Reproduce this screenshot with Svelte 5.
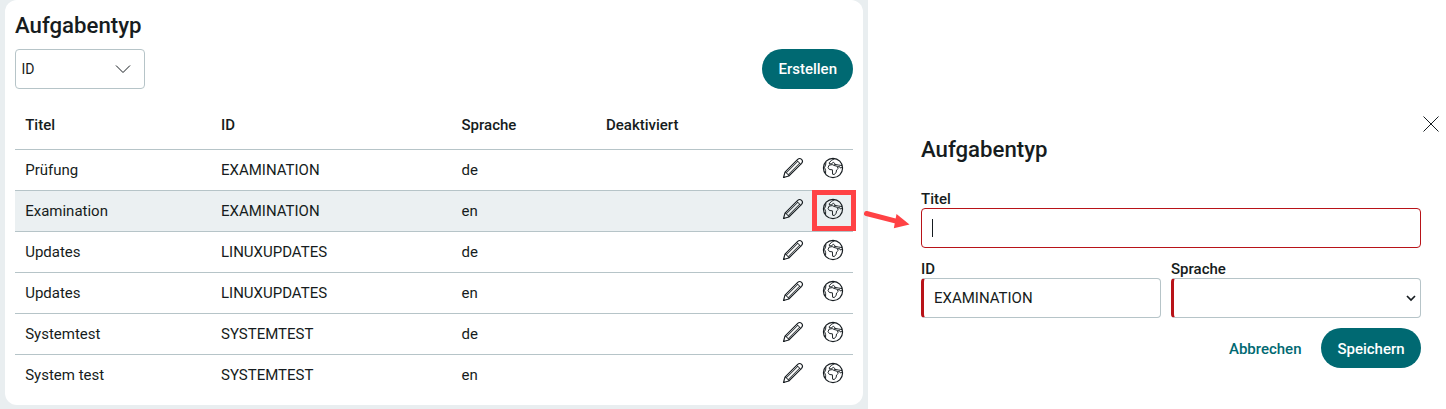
<script lang="ts">
	type Aufgabentyp = { titel: string; kennung: string; sprache: string; aktiv?: boolean };

	const spalten = ['Titel', 'ID', 'Sprache', 'Deaktiviert'];

	const eintraege: Aufgabentyp[] = [
		{ titel: 'Prüfung', kennung: 'EXAMINATION', sprache: 'de' },
		{ titel: 'Examination', kennung: 'EXAMINATION', sprache: 'en', aktiv: true },
		{ titel: 'Updates', kennung: 'LINUXUPDATES', sprache: 'de' },
		{ titel: 'Updates', kennung: 'LINUXUPDATES', sprache: 'en' },
		{ titel: 'Systemtest', kennung: 'SYSTEMTEST', sprache: 'de' },
		{ titel: 'System test', kennung: 'SYSTEMTEST', sprache: 'en' }
	];
</script>

{#snippet stift()}
	<svg class="icon" viewBox="0 0 22 22" aria-hidden="true">
		<path d="M1.5 20.5 3 15.2 15.7 2.4Q17.6.6 19.6 2.4 21.4 4.3 19.6 6.3L6.8 19Z" />
		<path class="fein" d="M3 15.2 4.6 15.3 5 17 6.7 17.4 6.8 19M4.8 15.4 16.2 4M6.6 17.2 18 5.8M14.8 3.4 18.6 7.2M1.5 20.5 3 20" />
	</svg>
{/snippet}

{#snippet globus()}
	<svg class="icon" viewBox="0 0 22 22" aria-hidden="true">
		<circle cx="11" cy="11" r="9.6" />
		<path class="fein" d="M3.9 5 3.6 8.2 2.5 10.4 3.6 13.4 3.6 16.4" />
		<path class="fein" d="M12.6 1.8 9.6 3.2 7.2 5.8 7.5 7 9.7 6.6 11.3 5.3 13 6.7 12.6 8" />
		<path class="fein" d="M7 8.2 10.2 7.6 13 8.8 14.5 8.9 16.3 11.3 14.5 13 14.2 15.2 12.3 17.6 10.6 17.2 10.4 12.8 7.4 12.5 6.1 10.6Z" />
		<path class="fein" d="M13 7.4 16.4 8 20.2 8.6M15.2 9.8 17.6 9.6 18.3 11 20.4 10.4" />
	</svg>
{/snippet}

<div class="seite">
	<section class="liste">
		<div class="karte">
			<h1>Aufgabentyp</h1>
			<div class="werkzeuge">
				<button class="filter" type="button">
					ID
					<svg viewBox="0 0 16 10" aria-hidden="true"><path d="M1 1.5 8 8.5 15 1.5" /></svg>
				</button>
				<button class="primaer" type="button">Erstellen</button>
			</div>
			<div class="tabelle">
				<div class="zeile kopf">
					{#each spalten as spalte (spalte)}
						<span>{spalte}</span>
					{/each}
				</div>
				{#each eintraege as eintrag, i (i)}
					<div class="zeile" class:aktiv={eintrag.aktiv}>
						<span>{eintrag.titel}</span>
						<span>{eintrag.kennung}</span>
						<span>{eintrag.sprache}</span>
						<span></span>
						<span class="aktion">{@render stift()}</span>
						<span class="aktion">
							{@render globus()}
							{#if eintrag.aktiv}<span class="markierung"></span>{/if}
						</span>
					</div>
				{/each}
			</div>
		</div>
	</section>

	<!-- Hinweispfeil von der markierten Aktion zum Dialog -->
	<svg class="pfeil" viewBox="0 0 48 22" aria-hidden="true">
		<path class="schaft" d="M3.5 4.5 34 12.3" />
		<path class="spitze" d="M33.5 5 46.5 15.5 30.8 19.2Z" />
	</svg>

	<section class="dialog">
		<button class="schliessen" type="button" aria-label="Schließen">
			<svg viewBox="0 0 16 16" aria-hidden="true"><path d="M.5.5 15.5 15.5M15.5.5.5 15.5" /></svg>
		</button>
		<h2>Aufgabentyp</h2>
		<div class="feld">
			<span class="label">Titel</span>
			<div class="eingabe fokus"><span class="cursor"></span></div>
		</div>
		<div class="felder">
			<div class="feld">
				<span class="label">ID</span>
				<div class="eingabe pflicht">EXAMINATION</div>
			</div>
			<div class="feld">
				<span class="label">Sprache</span>
				<div class="eingabe pflicht auswahl">
					<svg viewBox="0 0 10 7" aria-hidden="true"><path d="M1 1 5 5 9 1" /></svg>
				</div>
			</div>
		</div>
		<div class="fuss">
			<button class="abbrechen" type="button">Abbrechen</button>
			<button class="primaer speichern" type="button">Speichern</button>
		</div>
	</section>
</div>

<style>
	:global(body) {
		background: #fff;
		overflow: hidden;
	}

	.seite {
		position: relative;
		display: flex;
		height: 409px;
		font: 400 15px/20px Roboto, sans-serif;
		color: #161c20;
	}

	button {
		box-sizing: border-box;
		font: inherit;
		color: inherit;
		cursor: pointer;
	}

	svg {
		display: block;
		fill: none;
		stroke: #161c20;
	}

	.liste {
		box-sizing: border-box;
		width: 868px;
		padding: 0 5px 4px;
		background: #e9eef0;
	}

	.karte {
		box-sizing: border-box;
		height: 405px;
		padding: 10px;
		background: #fff;
		border-radius: 12px;
	}

	h1,
	h2 {
		margin: 0;
		font-weight: 500;
		font-size: 22.2px;
		line-height: 30px;
	}

	.werkzeuge {
		display: flex;
		justify-content: space-between;
		margin-top: 9px;
	}

	.filter {
		display: flex;
		align-items: center;
		justify-content: space-between;
		width: 130px;
		height: 40px;
		padding: 0 13px 0 5.5px;
		background: #fff;
		border: 1px solid #b6c4c8;
		border-radius: 4px;
		font-size: 14px;
	}

	.filter svg {
		width: 16px;
		height: 10px;
	}

	.primaer {
		height: 40px;
		padding: 0 16px;
		border: 0;
		border-radius: 20px;
		background: #006972;
		color: #fff;
		font-weight: 500;
	}

	.tabelle {
		margin-top: 11px;
	}

	.zeile {
		display: grid;
		grid-template-columns: 196px 240.5px 144.5px 176px 40px 41px;
		align-items: center;
		height: 40px;
		border-top: 1px solid #b6c4c8;
	}

	.zeile > span {
		padding-left: 10px;
	}

	.zeile > span:first-child {
		padding-left: 10.2px;
	}

	.zeile.kopf {
		height: 49px;
		border-top: 0;
		font-weight: 500;
	}

	.zeile.aktiv {
		background: #ebf0f2;
	}

	.zeile > .aktion {
		position: relative;
		padding: 0 0 4px 10px;
	}

	.icon {
		width: 22px;
		height: 22px;
		stroke-width: 1.15;
		stroke-linejoin: round;
	}

	.fein {
		stroke-width: 0.95;
	}

	.markierung {
		position: absolute;
		top: -8px;
		left: 0;
		box-sizing: border-box;
		width: 44px;
		height: 41px;
		border: 5px solid #ff4245;
	}

	.pfeil {
		position: absolute;
		top: 209px;
		left: 863px;
		width: 48px;
		height: 22px;
	}

	.schaft {
		stroke: #ff4245;
		stroke-width: 5;
		stroke-linecap: round;
	}

	.spitze {
		fill: #ff4245;
		stroke: none;
	}

	.dialog {
		display: flex;
		flex-direction: column;
		width: 500px;
		padding: 116px 0 0 53px;
	}

	.schliessen {
		align-self: flex-end;
		height: 16px;
		margin-right: -18px;
		padding: 0;
		border: 0;
		background: none;
	}

	.schliessen svg {
		width: 16px;
		height: 16px;
	}

	h2 {
		margin: 2px 0 25px;
	}

	.feld {
		display: flex;
		flex-direction: column;
	}

	.label {
		height: 19px;
		line-height: 21px;
		font-weight: 500;
	}

	.eingabe {
		box-sizing: border-box;
		display: flex;
		align-items: center;
		height: 40px;
		padding: 0 10px;
		border: 1px solid #b6c4c8;
		border-radius: 4px;
	}

	.fokus {
		border-color: #b81318;
	}

	.cursor {
		width: 1px;
		height: 18px;
		background: #161c20;
	}

	.pflicht {
		border-left: 3px solid #b81318;
	}

	.felder {
		display: grid;
		grid-template-columns: 240px 250px;
		gap: 10px;
		margin-top: 11px;
	}

	.auswahl {
		justify-content: flex-end;
		padding-right: 4px;
	}

	.auswahl svg {
		width: 10px;
		height: 7px;
		stroke-width: 1.7;
	}

	.fuss {
		display: flex;
		justify-content: flex-end;
		gap: 19.5px;
		margin-top: 10px;
	}

	.speichern {
		width: 100px;
		padding: 2px 0 0;
	}

	.abbrechen {
		padding: 2px 0 0;
		border: 0;
		background: none;
		color: #006972;
		font-weight: 500;
	}
</style>
